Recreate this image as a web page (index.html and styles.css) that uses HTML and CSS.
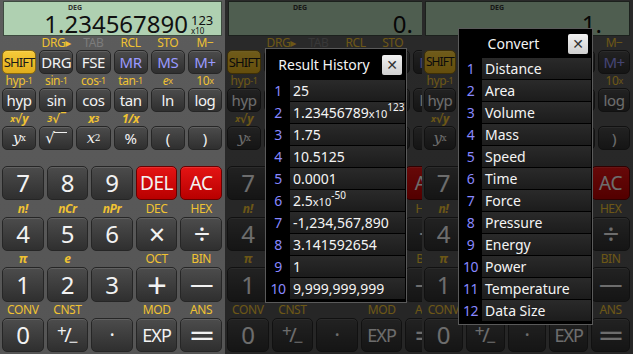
FILE: index.html
```html
<!doctype html>
<html lang="en">
<head>
    <meta charset="UTF-8">
    <title>Scientific Calculator</title>
    <link rel="stylesheet" href="styles.css">
</head>
<body>
<div class="screens">

    <!-- Экран 1: основной -->
    <div class="phone phone-1">
        <div class="calc">
            <div class="lcd">
                <div class="lcd-status">DEG</div>
                <div class="lcd-main">
                    <span class="num">1.234567890</span>
                    <span class="exp"><b>123</b><i>x10</i></span>
                </div>
            </div>
            <div class="pad-small">
                <span class="lbl"></span><span class="lbl">DRG▸</span><span class="lbl off">TAB</span><span class="lbl">RCL</span><span class="lbl">STO</span><span class="lbl">M−</span>
                <div class="key shift">SHIFT</div><div class="key">DRG</div><div class="key">FSE</div><div class="key mem">MR</div><div class="key mem">MS</div><div class="key mem">M+</div>
                <span class="lbl">hyp<sup>-1</sup></span><span class="lbl">sin<sup>-1</sup></span><span class="lbl">cos<sup>-1</sup></span><span class="lbl">tan<sup>-1</sup></span><span class="lbl"><i>e</i><sup>x</sup></span><span class="lbl">10<sup>x</sup></span>
                <div class="key">hyp</div><div class="key">sin</div><div class="key">cos</div><div class="key">tan</div><div class="key">ln</div><div class="key">log</div>
                <span class="lbl it"><sup>x</sup>√y</span><span class="lbl it"><sup>3</sup>√‾</span><span class="lbl it">x<sup>3</sup></span><span class="lbl it">1/x</span><span class="lbl"></span><span class="lbl"></span>
                <div class="key fn"><i>y</i><sup>x</sup></div><div class="key fn">√<span class="bar"></span></div><div class="key fn"><i>x</i><sup>2</sup></div><div class="key">%</div><div class="key">(</div><div class="key">)</div>
            </div>
            <div class="pad-big">
                <div class="key">7</div><div class="key">8</div><div class="key">9</div><div class="key red">DEL</div><div class="key red">AC</div>
                <span class="lbl it">n!</span><span class="lbl it">nCr</span><span class="lbl it">nPr</span><span class="lbl">DEC</span><span class="lbl">HEX</span>
                <div class="key">4</div><div class="key">5</div><div class="key">6</div><div class="key op"><span>×</span></div><div class="key op"><span>÷</span></div>
                <span class="lbl it">π</span><span class="lbl it">e</span><span class="lbl"></span><span class="lbl">OCT</span><span class="lbl">BIN</span>
                <div class="key">1</div><div class="key">2</div><div class="key">3</div><div class="key op plus"><span>+</span></div><div class="key op wide"><span>−</span></div>
                <span class="lbl">CONV</span><span class="lbl">CNST</span><span class="lbl"></span><span class="lbl">MOD</span><span class="lbl">ANS</span>
                <div class="key">0</div><div class="key pm"><span>+</span><span>/</span><span>−</span></div><div class="key dot">·</div><div class="key word">EXP</div><div class="key op wide"><span>=</span></div>
            </div>
        </div>
    </div>

    <!-- Экран 2: история результатов -->
    <div class="phone phone-2 dim">
        <div class="calc">
            <div class="lcd">
                <div class="lcd-status">DEG</div>
                <div class="lcd-main">
                    <span class="num">0.</span>
                    <span class="exp"></span>
                </div>
            </div>
            <div class="pad-small">
                <span class="lbl"></span><span class="lbl">DRG▸</span><span class="lbl off">TAB</span><span class="lbl">RCL</span><span class="lbl">STO</span><span class="lbl">M−</span>
                <div class="key shift">SHIFT</div><div class="key">DRG</div><div class="key">FSE</div><div class="key mem">MR</div><div class="key mem">MS</div><div class="key mem">M+</div>
                <span class="lbl">hyp<sup>-1</sup></span><span class="lbl">sin<sup>-1</sup></span><span class="lbl">cos<sup>-1</sup></span><span class="lbl">tan<sup>-1</sup></span><span class="lbl"><i>e</i><sup>x</sup></span><span class="lbl">10<sup>x</sup></span>
                <div class="key">hyp</div><div class="key">sin</div><div class="key">cos</div><div class="key">tan</div><div class="key">ln</div><div class="key">log</div>
                <span class="lbl it"><sup>x</sup>√y</span><span class="lbl it"><sup>3</sup>√‾</span><span class="lbl it">x<sup>3</sup></span><span class="lbl it">1/x</span><span class="lbl"></span><span class="lbl"></span>
                <div class="key fn"><i>y</i><sup>x</sup></div><div class="key fn">√<span class="bar"></span></div><div class="key fn"><i>x</i><sup>2</sup></div><div class="key">%</div><div class="key">(</div><div class="key">)</div>
            </div>
            <div class="pad-big">
                <div class="key">7</div><div class="key">8</div><div class="key">9</div><div class="key red">DEL</div><div class="key red">AC</div>
                <span class="lbl it">n!</span><span class="lbl it">nCr</span><span class="lbl it">nPr</span><span class="lbl">DEC</span><span class="lbl">HEX</span>
                <div class="key">4</div><div class="key">5</div><div class="key">6</div><div class="key op"><span>×</span></div><div class="key op"><span>÷</span></div>
                <span class="lbl it">π</span><span class="lbl it">e</span><span class="lbl"></span><span class="lbl">OCT</span><span class="lbl">BIN</span>
                <div class="key">1</div><div class="key">2</div><div class="key">3</div><div class="key op plus"><span>+</span></div><div class="key op wide"><span>−</span></div>
                <span class="lbl">CONV</span><span class="lbl">CNST</span><span class="lbl"></span><span class="lbl">MOD</span><span class="lbl">ANS</span>
                <div class="key">0</div><div class="key pm"><span>+</span><span>/</span><span>−</span></div><div class="key dot">·</div><div class="key word">EXP</div><div class="key op wide"><span>=</span></div>
            </div>
        </div>

        <div class="dialog history">
            <div class="dialog-head">
                <span class="dialog-title">Result History</span>
                <span class="close">✕</span>
            </div>
            <div class="row"><span class="idx">1</span><span class="val">25</span></div>
            <div class="row"><span class="idx">2</span><span class="val">1.23456789<small>x10</small><sup>123</sup></span></div>
            <div class="row"><span class="idx">3</span><span class="val">1.75</span></div>
            <div class="row"><span class="idx">4</span><span class="val">10.5125</span></div>
            <div class="row"><span class="idx">5</span><span class="val">0.0001</span></div>
            <div class="row"><span class="idx">6</span><span class="val">2.5<small>x10</small><sup>-50</sup></span></div>
            <div class="row"><span class="idx">7</span><span class="val">-1,234,567,890</span></div>
            <div class="row"><span class="idx">8</span><span class="val">3.141592654</span></div>
            <div class="row"><span class="idx">9</span><span class="val">1</span></div>
            <div class="row"><span class="idx">10</span><span class="val">9,999,999,999</span></div>
        </div>
    </div>

    <!-- Экран 3: конвертер -->
    <div class="phone phone-3 dim">
        <div class="calc">
            <div class="lcd">
                <div class="lcd-status">DEG</div>
                <div class="lcd-main">
                    <span class="num">1.</span>
                    <span class="exp"></span>
                </div>
            </div>
            <div class="pad-small">
                <span class="lbl"></span><span class="lbl">DRG▸</span><span class="lbl off">TAB</span><span class="lbl">RCL</span><span class="lbl">STO</span><span class="lbl">M−</span>
                <div class="key shift">SHIFT</div><div class="key">DRG</div><div class="key">FSE</div><div class="key mem">MR</div><div class="key mem">MS</div><div class="key mem">M+</div>
                <span class="lbl">hyp<sup>-1</sup></span><span class="lbl">sin<sup>-1</sup></span><span class="lbl">cos<sup>-1</sup></span><span class="lbl">tan<sup>-1</sup></span><span class="lbl"><i>e</i><sup>x</sup></span><span class="lbl">10<sup>x</sup></span>
                <div class="key">hyp</div><div class="key">sin</div><div class="key">cos</div><div class="key">tan</div><div class="key">ln</div><div class="key">log</div>
                <span class="lbl it"><sup>x</sup>√y</span><span class="lbl it"><sup>3</sup>√‾</span><span class="lbl it">x<sup>3</sup></span><span class="lbl it">1/x</span><span class="lbl"></span><span class="lbl"></span>
                <div class="key fn"><i>y</i><sup>x</sup></div><div class="key fn">√<span class="bar"></span></div><div class="key fn"><i>x</i><sup>2</sup></div><div class="key">%</div><div class="key">(</div><div class="key">)</div>
            </div>
            <div class="pad-big">
                <div class="key">7</div><div class="key">8</div><div class="key">9</div><div class="key red">DEL</div><div class="key red">AC</div>
                <span class="lbl it">n!</span><span class="lbl it">nCr</span><span class="lbl it">nPr</span><span class="lbl">DEC</span><span class="lbl">HEX</span>
                <div class="key">4</div><div class="key">5</div><div class="key">6</div><div class="key op"><span>×</span></div><div class="key op"><span>÷</span></div>
                <span class="lbl it">π</span><span class="lbl it">e</span><span class="lbl"></span><span class="lbl">OCT</span><span class="lbl">BIN</span>
                <div class="key">1</div><div class="key">2</div><div class="key">3</div><div class="key op plus"><span>+</span></div><div class="key op wide"><span>−</span></div>
                <span class="lbl">CONV</span><span class="lbl">CNST</span><span class="lbl"></span><span class="lbl">MOD</span><span class="lbl">ANS</span>
                <div class="key">0</div><div class="key pm"><span>+</span><span>/</span><span>−</span></div><div class="key dot">·</div><div class="key word">EXP</div><div class="key op wide"><span>=</span></div>
            </div>
        </div>

        <div class="dialog convert">
            <div class="dialog-head">
                <span class="dialog-title">Convert</span>
                <span class="close">✕</span>
            </div>
            <div class="row"><span class="idx">1</span><span class="val">Distance</span></div>
            <div class="row"><span class="idx">2</span><span class="val">Area</span></div>
            <div class="row"><span class="idx">3</span><span class="val">Volume</span></div>
            <div class="row"><span class="idx">4</span><span class="val">Mass</span></div>
            <div class="row"><span class="idx">5</span><span class="val">Speed</span></div>
            <div class="row"><span class="idx">6</span><span class="val">Time</span></div>
            <div class="row"><span class="idx">7</span><span class="val">Force</span></div>
            <div class="row"><span class="idx">8</span><span class="val">Pressure</span></div>
            <div class="row"><span class="idx">9</span><span class="val">Energy</span></div>
            <div class="row"><span class="idx">10</span><span class="val">Power</span></div>
            <div class="row"><span class="idx">11</span><span class="val">Temperature</span></div>
            <div class="row"><span class="idx">12</span><span class="val">Data Size</span></div>
        </div>
    </div>

</div>
</body>
</html>
```

FILE: styles.css
```css
/* Общие стили */
body, html {
    margin: 0;
    padding: 0;
    background-color: #111;
    font-family: "Noto Sans", "DejaVu Sans", sans-serif;
    overflow: hidden;
}

.screens {
    display: flex;
    height: 354px;
}

/* Один экран телефона */
.phone {
    position: relative;
    flex: none;
    height: 354px;
    overflow: hidden;
    background: linear-gradient(#5c5c5c, #555);
}

.phone-1 { width: 225px; }
.phone-2 { width: 197px; }
.phone-3 { width: 211px; }

.calc {
    box-sizing: border-box;
    height: 354px;
    padding: 1px 3px 0 2px;
}

.phone-2 .calc { width: 225px; }

/* Затемнение под диалогом */
.dim::after {
    content: "";
    position: absolute;
    top: 0;
    left: 0;
    right: 0;
    bottom: 0;
    background: rgba(0, 0, 0, 0.55);
    z-index: 1;
}

/* Дисплей */
.lcd {
    height: 35px;
    margin-left: 1px;
    box-sizing: border-box;
    background-color: #afd0b1;
    border: 1px solid #3e4b40;
    display: flex;
    flex-direction: column;
}

.lcd-status {
    height: 9px;
    padding: 2px 0 0 64px;
    font-size: 7px;
    font-weight: bold;
    line-height: 8px;
    color: #333;
}

.lcd-main {
    flex-grow: 1;
    display: flex;
    justify-content: flex-end;
    align-items: flex-end;
}

.num {
    font-size: 24px;
    line-height: 22px;
    color: #111;
}

.exp {
    width: 30px;
    display: flex;
    flex-direction: column;
    align-items: flex-start;
    padding-left: 3px;
    color: #111;
}

.phone-3 .exp { width: 24px; }

.exp b {
    font-weight: normal;
    font-size: 13px;
    line-height: 12px;
}

.exp i {
    font-style: normal;
    font-size: 8px;
    line-height: 9px;
}

/* Клавиатура */
.pad-small {
    display: grid;
    grid-template-columns: repeat(6, 1fr);
    grid-template-rows: 14px 24px 14px 24px 14px 24px;
    column-gap: 3px;
}

.pad-big {
    margin-top: 16px;
    display: grid;
    grid-template-columns: repeat(5, 1fr);
    grid-template-rows: 34px 17px 34px 16px 35px 16px 34px;
    column-gap: 3px;
}

.lbl {
    display: flex;
    align-items: center;
    justify-content: center;
    font-size: 12px;
    line-height: 12px;
    color: #f0c232;
    letter-spacing: -0.4px;
    white-space: nowrap;
}

.lbl.off { color: #7c7c7c; }
.lbl.it { font-style: italic; font-weight: bold; font-size: 12px; }
.lbl sup { font-size: 9px; line-height: 0; vertical-align: 4px; }

.key {
    display: flex;
    align-items: center;
    justify-content: center;
    box-sizing: border-box;
    border-radius: 5px;
    border: 1px solid #262626;
    background: linear-gradient(#4c4c4c, #2f2f2f);
    box-shadow: inset 0 1px 0 rgba(255, 255, 255, 0.12);
    color: #f2f2f2;
    font-size: 15px;
    line-height: 1;
    letter-spacing: -0.4px;
    white-space: nowrap;
}

.pad-big .key { font-size: 24px; }

.key.shift {
    background: linear-gradient(#f7cb3a, #e0ad1c);
    border-color: #8a6a10;
    color: #1a1a1a;
    font-size: 13px;
    letter-spacing: -0.9px;
}

.phone-3 .key.shift { font-size: 12px; }

.key.mem { color: #9a9aff; }

.key.red {
    background: linear-gradient(#e41414, #b80000);
    border-color: #6a0000;
    font-size: 19px !important;
}

.key.fn { font-family: "DejaVu Serif", serif; font-size: 15px; }
.key.fn sup { font-size: 9px; vertical-align: 6px; line-height: 0; }
.key.fn .bar { display: inline-block; width: 13px; height: 12px; border-top: 1.5px solid #f2f2f2; margin-top: 1px; }

.key.op { font-size: 24px !important; }
.key.op span { display: inline-block; transform: scale(1.2); }
.key.op.plus span { transform: scale(1.45); }
.key.op.wide span { transform: scale(1.9, 1.3); }
.key.dot { font-size: 20px !important; }
.key.word { font-size: 18px !important; letter-spacing: -1px; }

.key.pm { font-size: 17px !important; }
.key.pm span:nth-child(1) { margin: -10px -2px 0 0; }
.key.pm span:nth-child(2) { font-size: 20px; }
.key.pm span:nth-child(3) { margin: 12px 0 0 -3px; }

/* Диалоги */
.dialog {
    position: absolute;
    z-index: 2;
    background-color: #000;
    border: 1px solid #5a5a5a;
    box-sizing: border-box;
    padding-bottom: 2px;
}

.history { left: 40px; top: 48px; width: 142px; }
.convert { left: 36px; top: 28px; width: 135px; }

.dialog-head {
    display: flex;
    align-items: center;
    padding: 0 4px 0 0;
}

.history .dialog-head { height: 31px; }
.convert .dialog-head { height: 29px; }

.dialog-title {
    flex-grow: 1;
    text-align: center;
    color: #f4f4f4;
    font-size: 14px;
}

.close {
    width: 20px;
    height: 20px;
    border-radius: 2px;
    background: linear-gradient(#f0f0f0, #cfcfcf);
    color: #333;
    font-size: 14px;
    font-weight: bold;
    display: flex;
    align-items: center;
    justify-content: center;
}

.row {
    display: flex;
    height: 21px;
    margin-bottom: 1px;
}

.idx {
    width: 24px;
    flex: none;
    text-align: center;
    color: #8888ff;
    font-size: 14px;
    line-height: 21px;
    letter-spacing: -0.5px;
}

.convert .idx { width: 23px; }

.val {
    flex-grow: 1;
    margin-right: 1px;
    padding-left: 3px;
    background: linear-gradient(#2a2a2a, #1c1c1c);
    color: #f4f4f4;
    font-size: 14px;
    line-height: 21px;
    white-space: nowrap;
}

.val small { font-size: 11px; }
.val sup { font-size: 10px; line-height: 0; vertical-align: 7px; }
```
